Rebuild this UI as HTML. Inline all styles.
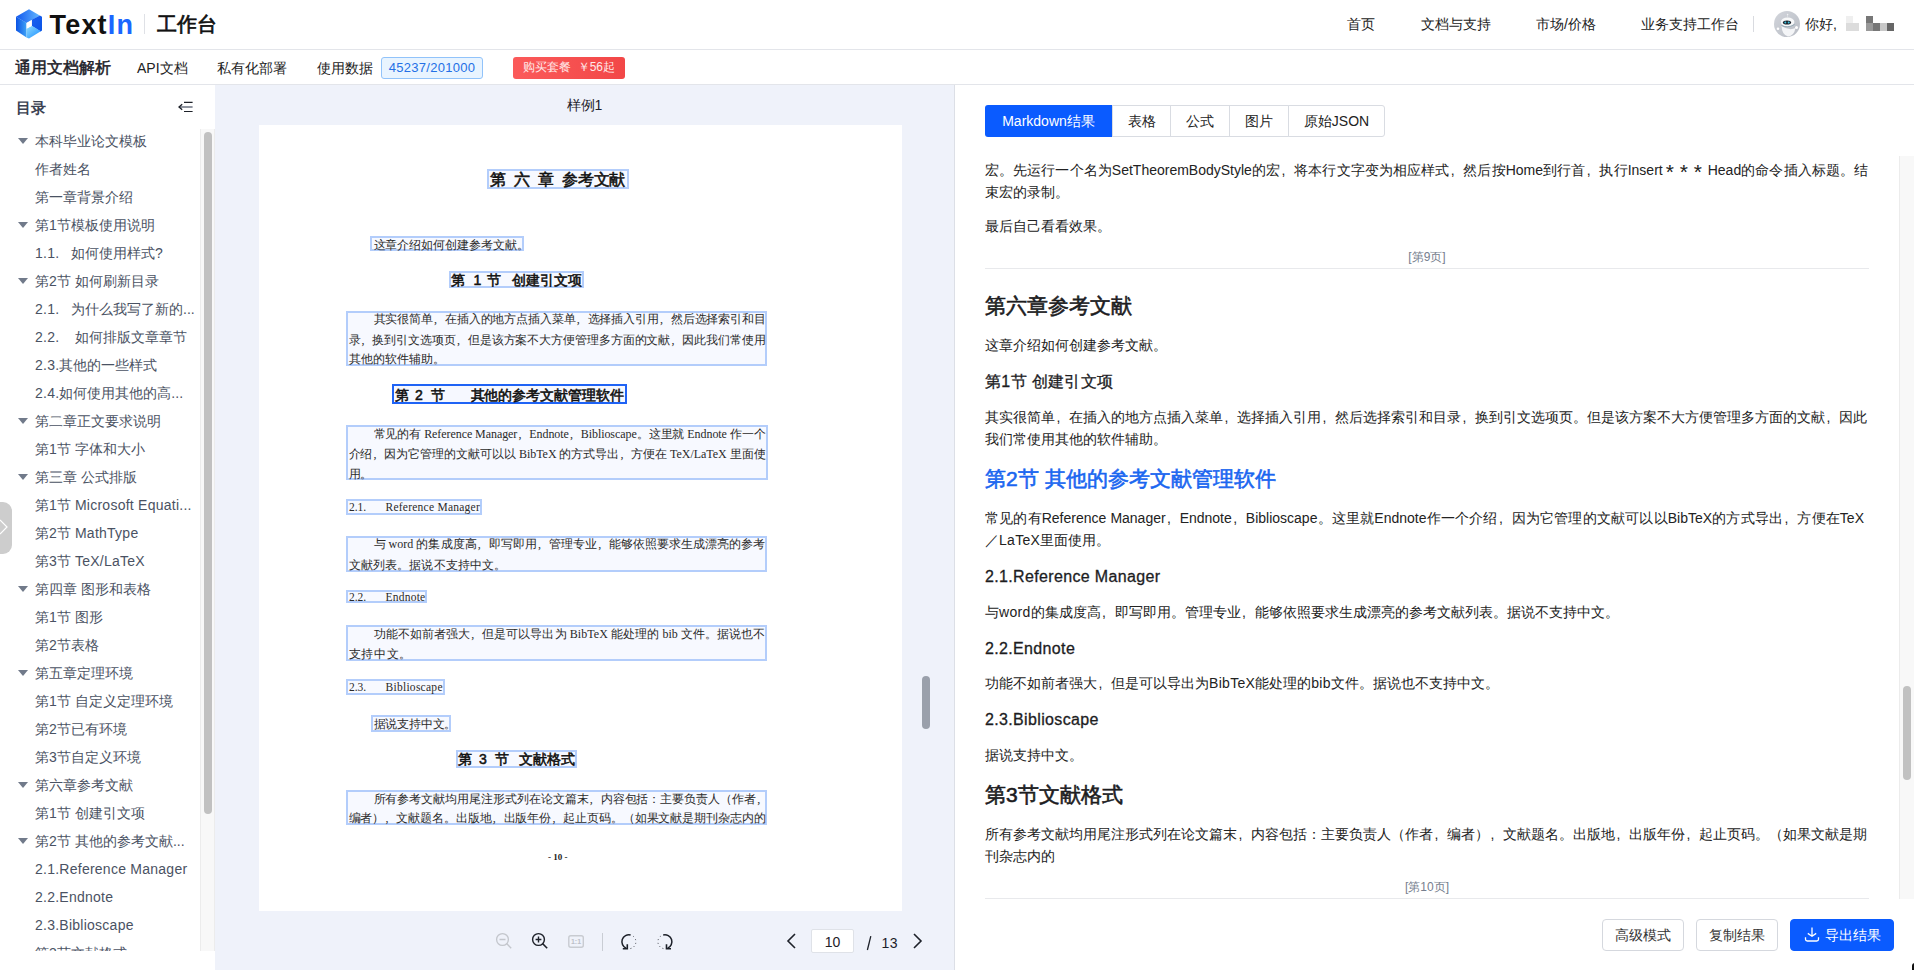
<!DOCTYPE html>
<html><head><meta charset="utf-8">
<style>
*{margin:0;padding:0;box-sizing:border-box}
html,body{width:1914px;height:970px;overflow:hidden;background:#fff;font-family:"Liberation Sans",sans-serif;color:#1d2129}
.a{position:absolute;white-space:nowrap}
#hdr{position:absolute;left:0;top:0;width:1914px;height:50px;border-bottom:1px solid #e3e5ea;background:#fff}
#nav{position:absolute;left:0;top:50px;width:1914px;height:35px;border-bottom:1px solid #e3e5ea;background:#fff}
#side{position:absolute;left:0;top:85px;width:215px;height:885px;background:#fff}
#pdf{position:absolute;left:215px;top:85px;width:739px;height:885px;background:#eff2fa}
#divv{position:absolute;left:954px;top:85px;width:1px;height:885px;background:#dcdfe6}
#right{position:absolute;left:955px;top:85px;width:959px;height:885px;background:#fff}
.toc{position:absolute;left:0;font-size:14px;line-height:20px;color:#4a5263;white-space:nowrap}
.tri{position:absolute;left:17.6px;width:0;height:0;border-left:5.2px solid transparent;border-right:5.2px solid transparent;border-top:6px solid #717a8a}
.md{position:absolute;left:30px;font-size:14px;line-height:22px;color:#222;white-space:nowrap}
.h1{position:absolute;left:30px;font-size:21px;line-height:28px;font-weight:normal;-webkit-text-stroke:0.6px currentColor;color:#1d1d1f;white-space:nowrap}
.h3{position:absolute;left:30px;font-size:16px;line-height:22px;font-weight:normal;-webkit-text-stroke:0.3px currentColor;letter-spacing:0.35px;color:#1d1d1f;white-space:nowrap}
.pg{position:absolute;left:30px;width:884px;text-align:center;font-size:12px;line-height:16px;color:#767e8e}
.cm{display:inline-block;width:1em;text-indent:0.1em;text-align:left}
.sts{display:inline-block;width:45px;padding-left:3px;white-space:nowrap}.st{display:inline-block;width:14px;text-align:center;font-size:21px;line-height:14px;position:relative;top:4px;letter-spacing:0}
.hr{position:absolute;left:30px;width:884px;height:1px;background:#e8e9ec}
.bx{position:absolute;border:2px solid #b3cdfb;background:#f7f9ff}
.pt{position:absolute;font-family:"Liberation Serif",serif;font-size:12.5px;line-height:20px;color:#2a2a2a;white-space:nowrap}
.ph{position:absolute;font-family:"Liberation Sans",sans-serif;font-weight:normal;-webkit-text-stroke:0.55px #111;color:#111;white-space:nowrap}
.btn{position:absolute;top:834px;height:32px;border:1px solid #d5d8de;border-radius:4px;background:#fff;font-size:14px;line-height:30px;text-align:center;color:#333}
</style></head><body>

<!-- HEADER -->
<div id="hdr">
  <svg class="a" style="left:14px;top:7px" width="32" height="34" viewBox="14 7 32 34">
    <defs>
      <linearGradient id="gt" x1="0" y1="0" x2="1" y2="0"><stop offset="0" stop-color="#1258ee"/><stop offset="1" stop-color="#62b6ff"/></linearGradient>
      <linearGradient id="gl" x1="0" y1="0" x2="1" y2="0"><stop offset="0" stop-color="#0b52e4"/><stop offset="1" stop-color="#3ea2f6"/></linearGradient>
      <linearGradient id="gr" x1="0" y1="0" x2="1" y2="1"><stop offset="0" stop-color="#1a5ff0"/><stop offset="1" stop-color="#0a54e6"/></linearGradient>
      <linearGradient id="gb" x1="0" y1="0" x2="1" y2="1"><stop offset="0" stop-color="#8fdcff"/><stop offset="1" stop-color="#1a8dff"/></linearGradient>
    </defs>
    <polygon points="16,16.8 29,9.2 39.8,15.5 31.8,20 26.5,23" fill="url(#gt)"/>
    <polygon points="16,16.8 26.5,22.8 26.5,37.6 16,30.6" fill="url(#gl)"/>
    <polygon points="31.8,19.8 39.8,15.4 42,16.8 42,30.6 40.6,31.4 31.8,26" fill="url(#gr)"/>
    <polygon points="26.5,28.6 31.8,25.8 40.8,31.2 29,38.6 26.5,37.4" fill="url(#gb)"/>
    <polygon points="26.6,22.9 31.7,19.9 31.7,25.9 26.6,28.7" fill="#fff"/>
  </svg>
  <div class="a" style="left:49.5px;top:7.5px;font-size:27px;line-height:34px;font-weight:bold;letter-spacing:1.2px;color:#111"><span>Text</span><span style="color:#1a66ff">In</span></div>
  <div class="a" style="left:144px;top:14px;width:1px;height:20px;background:#dfe1e6"></div>
  <div class="a" style="left:157px;top:10px;font-size:20px;line-height:28px;font-weight:normal;-webkit-text-stroke:0.7px #111;color:#111">工作台</div>

  <div class="a" style="left:1347px;top:14px;font-size:14px;line-height:20px;color:#222">首页</div>
  <div class="a" style="left:1421px;top:14px;font-size:14px;line-height:20px;color:#222">文档与支持</div>
  <div class="a" style="left:1536px;top:14px;font-size:14px;line-height:20px;color:#222">市场/价格</div>
  <div class="a" style="left:1641px;top:14px;font-size:14px;line-height:20px;color:#222">业务支持工作台</div>
  <div class="a" style="left:1753px;top:16px;width:1px;height:16px;background:#d9dbe0"></div>
  <svg class="a" style="left:1774px;top:11px" width="26" height="26" viewBox="0 0 26 26">
    <defs><linearGradient id="av" x1="0" y1="0" x2="1" y2="1"><stop offset="0" stop-color="#d2d5db"/><stop offset="1" stop-color="#b9bdc5"/></linearGradient></defs>
    <circle cx="13" cy="13" r="13" fill="url(#av)"/>
    <path d="M7.5 15 Q8 24 14 25.5 Q20 25 21.5 17 Q15 20 7.5 15 Z" fill="#f4f5f7"/>
    <ellipse cx="13.6" cy="11" rx="6.8" ry="4.6" fill="#f7f8f9"/>
    <path d="M7.5 14.5 Q13.5 17.5 20.5 13.5" fill="none" stroke="#6f8ea0" stroke-width="0.6"/>
    <ellipse cx="13" cy="11.5" rx="4.1" ry="2.1" fill="#1c232c"/>
    <circle cx="11.3" cy="11.5" r="1" fill="#3fc0dc"/><circle cx="14.7" cy="11.5" r="1" fill="#3fc0dc"/>
    <circle cx="4" cy="17.8" r="1.3" fill="#fff"/><circle cx="22.5" cy="16.5" r="1.5" fill="#fff"/>
    <path d="M13.6 6.4 V4.3" stroke="#e9ebee" stroke-width="0.6"/><circle cx="13.6" cy="3.6" r="0.8" fill="#eef0f2"/>
  </svg>
  <div class="a" style="left:1805px;top:14px;font-size:14px;line-height:20px;color:#222">你好,</div>
  <div class="a" style="left:1846px;top:23px;width:13px;height:8px;background:#dcdcdc"></div>
  <div class="a" style="left:1846px;top:16px;width:7px;height:7px;background:#efefef"></div>
  <div class="a" style="left:1866px;top:16px;width:7px;height:7px;background:#777"></div>
  <div class="a" style="left:1866px;top:23px;width:7px;height:8px;background:#999"></div>
  <div class="a" style="left:1873px;top:23px;width:7px;height:8px;background:#777"></div>
  <div class="a" style="left:1880px;top:23px;width:7px;height:8px;background:#c8c8c8"></div>
  <div class="a" style="left:1887px;top:23px;width:7px;height:8px;background:#666"></div>
</div>

<!-- NAV -->
<div id="nav">
  <div class="a" style="left:15px;top:7px;font-size:16px;line-height:22px;font-weight:normal;-webkit-text-stroke:0.5px #1d2129;color:#1d2129">通用文档解析</div>
  <div class="a" style="left:137px;top:8px;font-size:14px;line-height:20px;color:#222">API文档</div>
  <div class="a" style="left:217px;top:8px;font-size:14px;line-height:20px;color:#222">私有化部署</div>
  <div class="a" style="left:317px;top:8px;font-size:14px;line-height:20px;color:#222">使用数据</div>
  <div class="a" style="left:381px;top:7px;width:102px;height:22px;border:1px solid #91c3fa;border-radius:3px;background:#e8f4ff;color:#2470e6;font-size:13px;line-height:20px;letter-spacing:0.3px;text-align:center">45237/201000</div>
  <div class="a" style="left:513px;top:7px;width:112px;height:22px;border-radius:3px;background:linear-gradient(90deg,#fb5a5a,#f24747);color:#ffe9e9;font-size:12px;line-height:21px;text-align:center">购买套餐&nbsp;&nbsp;￥56起</div>
</div>

<!-- SIDEBAR -->
<div id="side">
  <div class="a" style="left:16px;top:12px;font-size:15px;line-height:22px;font-weight:bold;color:#3b4252">目录</div>
  <svg class="a" style="left:177px;top:16px" width="17" height="12" viewBox="0 0 17 12">
    <path d="M7 1.4 H15.6 M7 10.5 H15.6" stroke="#1d2129" stroke-width="1.2"/>
    <path d="M2.5 6 H15.6" stroke="#6b7280" stroke-width="1.5"/>
    <path d="M5.2 3.2 L2 6 L5.2 8.8" fill="none" stroke="#1d2129" stroke-width="1.3"/>
  </svg>
  <div id="toclist" style="position:absolute;left:0;top:44px;width:200px;height:822px;overflow:hidden"><div class="tri" style="top:9px"></div>
<div class="toc" style="left:35px;top:2px">本科毕业论文模板</div>
<div class="toc" style="left:35px;top:30px">作者姓名</div>
<div class="toc" style="left:35px;top:58px">第一章背景介绍</div>
<div class="tri" style="top:93px"></div>
<div class="toc" style="left:35px;top:86px">第<span style="letter-spacing:0.25px">1</span>节模板使用说明</div>
<div class="toc" style="left:35px;top:114px"><span style="letter-spacing:0.25px">1.1.</span>&nbsp;&nbsp;&nbsp;如何使用样式?</div>
<div class="tri" style="top:149px"></div>
<div class="toc" style="left:35px;top:142px">第<span style="letter-spacing:0.25px">2</span>节 如何刷新目录</div>
<div class="toc" style="left:35px;top:170px"><span style="letter-spacing:0.25px">2.1.</span>&nbsp;&nbsp;&nbsp;为什么我写了新的...</div>
<div class="toc" style="left:35px;top:198px"><span style="letter-spacing:0.25px">2.2.</span>&nbsp;&nbsp;&nbsp;&nbsp;如何排版文章章节</div>
<div class="toc" style="left:35px;top:226px"><span style="letter-spacing:0.25px">2.3.</span>其他的一些样式</div>
<div class="toc" style="left:35px;top:254px"><span style="letter-spacing:0.25px">2.4.</span>如何使用其他的高...</div>
<div class="tri" style="top:289px"></div>
<div class="toc" style="left:35px;top:282px">第二章正文要求说明</div>
<div class="toc" style="left:35px;top:310px">第<span style="letter-spacing:0.25px">1</span>节 字体和大小</div>
<div class="tri" style="top:345px"></div>
<div class="toc" style="left:35px;top:338px">第三章 公式排版</div>
<div class="toc" style="left:35px;top:366px">第<span style="letter-spacing:0.25px">1</span>节 <span style="letter-spacing:0.25px">Microsoft Equati...</span></div>
<div class="toc" style="left:35px;top:394px">第<span style="letter-spacing:0.25px">2</span>节 <span style="letter-spacing:0.25px">MathType</span></div>
<div class="toc" style="left:35px;top:422px">第<span style="letter-spacing:0.25px">3</span>节 <span style="letter-spacing:0.25px">TeX/LaTeX</span></div>
<div class="tri" style="top:457px"></div>
<div class="toc" style="left:35px;top:450px">第四章 图形和表格</div>
<div class="toc" style="left:35px;top:478px">第<span style="letter-spacing:0.25px">1</span>节 图形</div>
<div class="toc" style="left:35px;top:506px">第<span style="letter-spacing:0.25px">2</span>节表格</div>
<div class="tri" style="top:541px"></div>
<div class="toc" style="left:35px;top:534px">第五章定理环境</div>
<div class="toc" style="left:35px;top:562px">第<span style="letter-spacing:0.25px">1</span>节 自定义定理环境</div>
<div class="toc" style="left:35px;top:590px">第<span style="letter-spacing:0.25px">2</span>节已有环境</div>
<div class="toc" style="left:35px;top:618px">第<span style="letter-spacing:0.25px">3</span>节自定义环境</div>
<div class="tri" style="top:653px"></div>
<div class="toc" style="left:35px;top:646px">第六章参考文献</div>
<div class="toc" style="left:35px;top:674px">第<span style="letter-spacing:0.25px">1</span>节 创建引文项</div>
<div class="tri" style="top:709px"></div>
<div class="toc" style="left:35px;top:702px">第<span style="letter-spacing:0.25px">2</span>节 其他的参考文献...</div>
<div class="toc" style="left:35px;top:730px"><span style="letter-spacing:0.25px">2.1.Reference Manager</span></div>
<div class="toc" style="left:35px;top:758px"><span style="letter-spacing:0.25px">2.2.Endnote</span></div>
<div class="toc" style="left:35px;top:786px"><span style="letter-spacing:0.25px">2.3.Biblioscape</span></div>
<div class="toc" style="left:35px;top:814px">第<span style="letter-spacing:0.25px">3</span>节文献格式</div></div>
  <div class="a" style="left:200px;top:44px;width:15px;height:822px;background:#f8f8f8;border-left:1px solid #ececec;border-right:1px solid #ececec"></div>
  <div class="a" style="left:204px;top:47px;width:8px;height:682px;border-radius:4px;background:#c1c1c1"></div>
  <div class="a" style="left:-10px;top:417px;width:22px;height:52px;border-radius:9px;background:#cdcdcd"></div>
  <svg class="a" style="left:0;top:433px" width="9" height="18" viewBox="0 0 9 18"><path d="M0 2 L7 9 L0 16" fill="none" stroke="#fff" stroke-width="1.2"/></svg>
</div>

<!-- PDF -->
<div id="pdf">
  <div class="a" style="left:0;top:10px;width:739px;text-align:center;font-size:14px;line-height:20px;color:#1d2129">样例1</div>
  <div class="a" style="left:44px;top:40px;width:643px;height:786px;background:#fff;overflow:hidden" id="page"><div class="bx" style="left:227.5px;top:43.599999999999994px;width:142.70000000000005px;height:20.900000000000006px"></div>
<div id="fit1" class="ph" style="left:231.0px;top:45.0px;font-size:16px;line-height:20px;letter-spacing:0.000px;"><span>第</span></div>
<div id="fit2" class="ph" style="left:255.29999999999995px;top:45.0px;font-size:16px;line-height:20px;letter-spacing:0.000px;"><span>六</span></div>
<div id="fit3" class="ph" style="left:278.79999999999995px;top:45.0px;font-size:16px;line-height:20px;letter-spacing:0.000px;"><span>章</span></div>
<div id="fit4" class="ph" style="left:303.1px;top:45.0px;font-size:16px;line-height:20px;letter-spacing:-0.200px;"><span>参考文献</span></div>
<div class="bx" style="left:110.80000000000001px;top:110.69999999999999px;width:154.40000000000003px;height:15.700000000000017px"></div>
<div id="fit5" class="pt" style="left:114.5px;top:110.0px;font-size:12px;line-height:20px;letter-spacing:-0.017px;"><span>这章介绍如何创建参考文献。</span></div>
<div class="bx" style="left:189.60000000000002px;top:145.5px;width:135.89999999999998px;height:17.69999999999999px"></div>
<div id="fit6" class="ph" style="left:192.10000000000002px;top:145.0px;font-size:14px;line-height:20px;letter-spacing:0.000px;"><span>第</span></div>
<div id="fit7" class="ph" style="left:214.5px;top:145.0px;font-size:14px;line-height:20px;letter-spacing:0.000px;"><span>1</span></div>
<div id="fit8" class="ph" style="left:227.8px;top:145.0px;font-size:14px;line-height:20px;letter-spacing:0.000px;"><span>节</span></div>
<div id="fit9" class="ph" style="left:252.89999999999998px;top:145.0px;font-size:14px;line-height:20px;letter-spacing:-0.050px;"><span>创建引文项</span></div>
<div class="bx" style="left:87.39999999999998px;top:185.8px;width:420.6px;height:55.19999999999999px"></div>
<div id="fit10" class="pt" style="left:114.5px;top:184.3px;font-size:12px;line-height:20px;letter-spacing:-0.125px;"><span>其实很简单<span class=cm>,</span>在插入的地方点插入菜单<span class=cm>,</span>选择插入引用<span class=cm>,</span>然后选择索引和目</span></div>
<div id="fit11" class="pt" style="left:89.5px;top:204.5px;font-size:12px;line-height:20px;letter-spacing:-0.088px;"><span>录<span class=cm>,</span>换到引文选项页<span class=cm>,</span>但是该方案不大方便管理多方面的文献<span class=cm>,</span>因此我们常使用</span></div>
<div id="fit12" class="pt" style="left:89.5px;top:224.3px;font-size:12px;line-height:20px;letter-spacing:0.114px;"><span>其他的软件辅助。</span></div>
<div class="bx" style="left:132.7px;top:259px;width:235.00000000000006px;height:20px;border:2px solid #1f63f5;background:#f6f8ff"></div>
<div id="fit13" class="ph" style="left:135.7px;top:260.0px;font-size:14px;line-height:20px;letter-spacing:0.000px;"><span>第</span></div>
<div id="fit14" class="ph" style="left:156.0px;top:260.0px;font-size:14px;line-height:20px;letter-spacing:0.000px;"><span>2</span></div>
<div id="fit15" class="ph" style="left:171.89999999999998px;top:260.0px;font-size:14px;line-height:20px;letter-spacing:0.000px;"><span>节</span></div>
<div id="fit16" class="ph" style="left:211.5px;top:260.0px;font-size:14px;line-height:20px;letter-spacing:-0.100px;"><span>其他的参考文献管理软件</span></div>
<div class="bx" style="left:87.39999999999998px;top:300.3px;width:421.20000000000005px;height:55.19999999999999px"></div>
<div id="fit17" class="pt" style="left:114.5px;top:298.6px;font-size:12px;line-height:20px;letter-spacing:-0.069px;"><span>常见的有 Reference Manager<span class=cm>,</span>Endnote<span class=cm>,</span>Biblioscape。这里就 Endnote 作一个</span></div>
<div id="fit18" class="pt" style="left:89.5px;top:318.6px;font-size:12px;line-height:20px;letter-spacing:-0.041px;"><span>介绍<span class=cm>,</span>因为它管理的文献可以以 BibTeX 的方式导出<span class=cm>,</span>方便在 TeX/LaTeX 里面使</span></div>
<div id="fit19" class="pt" style="left:89.5px;top:339.0px;font-size:12px;line-height:20px;letter-spacing:-0.200px;"><span>用。</span></div>
<div class="bx" style="left:87.39999999999998px;top:373.9px;width:135.40000000000003px;height:16.100000000000023px"></div>
<div id="fit20" class="pt" style="left:90.0px;top:372.0px;font-size:11.5px;line-height:20px;letter-spacing:-0.083px;"><span>2.1.</span></div>
<div id="fit21" class="pt" style="left:126.5px;top:372.0px;font-size:11.5px;line-height:20px;letter-spacing:0.247px;"><span>Reference Manager</span></div>
<div class="bx" style="left:87.39999999999998px;top:410.6px;width:420.6px;height:36.10000000000002px"></div>
<div id="fit22" class="pt" style="left:114.5px;top:409.0px;font-size:12px;line-height:20px;letter-spacing:0.038px;"><span>与 word 的集成度高<span class=cm>,</span>即写即用<span class=cm>,</span>管理专业<span class=cm>,</span>能够依照要求生成漂亮的参考</span></div>
<div id="fit23" class="pt" style="left:89.5px;top:429.79999999999995px;font-size:12px;line-height:20px;letter-spacing:0.150px;"><span>文献列表。据说不支持中文。</span></div>
<div class="bx" style="left:87.39999999999998px;top:465px;width:81.0px;height:13.200000000000045px"></div>
<div id="fit24" class="pt" style="left:90.0px;top:462.0px;font-size:11.5px;line-height:20px;letter-spacing:-0.083px;"><span>2.2.</span></div>
<div id="fit25" class="pt" style="left:126.5px;top:462.0px;font-size:11.5px;line-height:20px;letter-spacing:0.229px;"><span>Endnote</span></div>
<div class="bx" style="left:87.39999999999998px;top:500px;width:420.6px;height:35.700000000000045px"></div>
<div id="fit26" class="pt" style="left:114.5px;top:499.0px;font-size:12px;line-height:20px;letter-spacing:0.073px;"><span>功能不如前者强大<span class=cm>,</span>但是可以导出为 BibTeX 能处理的 bib 文件。据说也不</span></div>
<div id="fit27" class="pt" style="left:89.5px;top:519.0px;font-size:12px;line-height:20px;letter-spacing:0.700px;"><span>支持中文。</span></div>
<div class="bx" style="left:87.39999999999998px;top:554px;width:98.20000000000005px;height:16.200000000000045px"></div>
<div id="fit28" class="pt" style="left:90.0px;top:552.0px;font-size:11.5px;line-height:20px;letter-spacing:-0.083px;"><span>2.3.</span></div>
<div id="fit29" class="pt" style="left:126.5px;top:552.0px;font-size:11.5px;line-height:20px;letter-spacing:0.270px;"><span>Biblioscape</span></div>
<div class="bx" style="left:112px;top:590.4px;width:79.80000000000001px;height:16.600000000000023px"></div>
<div id="fit30" class="pt" style="left:114.5px;top:588.5px;font-size:12px;line-height:20px;letter-spacing:-0.200px;"><span>据说支持中文。</span></div>
<div class="bx" style="left:197px;top:625px;width:121px;height:17.600000000000023px"></div>
<div id="fit31" class="ph" style="left:199.3px;top:624.0px;font-size:14px;line-height:20px;letter-spacing:0.000px;"><span>第</span></div>
<div id="fit32" class="ph" style="left:220.0px;top:624.0px;font-size:14px;line-height:20px;letter-spacing:0.000px;"><span>3</span></div>
<div id="fit33" class="ph" style="left:236.0px;top:624.0px;font-size:14px;line-height:20px;letter-spacing:0.000px;"><span>节</span></div>
<div id="fit34" class="ph" style="left:260.29999999999995px;top:624.0px;font-size:14px;line-height:20px;letter-spacing:-0.200px;"><span>文献格式</span></div>
<div class="bx" style="left:87.39999999999998px;top:665px;width:420.6px;height:35px"></div>
<div id="fit35" class="pt" style="left:114.5px;top:663.5px;font-size:12px;line-height:20px;letter-spacing:-0.050px;"><span>所有参考文献均用尾注形式列在论文篇末<span class=cm>,</span>内容包括：主要负责人（作者<span class=cm>,</span></span></div>
<div id="fit36" class="pt" style="left:89.5px;top:683.0px;font-size:12px;line-height:20px;letter-spacing:-0.088px;"><span>编者）<span class=cm>,</span>文献题名。出版地<span class=cm>,</span>出版年份<span class=cm>,</span>起止页码。（如果文献是期刊杂志内的</span></div>
<div class="a" style="left:289px;top:726px;font-size:9px;line-height:12px;color:#222;font-weight:bold;font-family:'Liberation Serif',serif">- 10 -</div></div><svg class="a" style="left:279px;top:846px" width="20" height="20" viewBox="0 0 20 20"><circle cx="8.5" cy="8.5" r="5.9" fill="none" stroke="#c3c6cc" stroke-width="1.3"/><path d="M12.6 12.6 L17.2 17.2" stroke="#c3c6cc" stroke-width="1.4"/><path d="M5.5 8.5 H11.5" stroke="#c3c6cc" stroke-width="1.5"/></svg>
<svg class="a" style="left:315px;top:846px" width="20" height="20" viewBox="0 0 20 20"><circle cx="8.5" cy="8.5" r="5.9" fill="none" stroke="#1d2129" stroke-width="1.4"/><path d="M12.6 12.6 L17.2 17.2" stroke="#1d2129" stroke-width="1.5"/><path d="M5.6 8.5 H11.4 M8.5 5.6 V11.4" stroke="#1d2129" stroke-width="1.4"/></svg>
<svg class="a" style="left:351px;top:848px" width="20" height="16" viewBox="0 0 20 16"><rect x="2.8" y="2.8" width="14.5" height="11.5" rx="2" fill="none" stroke="#c8cbd1" stroke-width="1.4"/><text x="10" y="11.4" font-size="7" font-weight="bold" text-anchor="middle" fill="#bcc0c8" font-family="Liberation Sans">1:1</text></svg>
<div class="a" style="left:387px;top:848px;width:1px;height:18px;background:#c9cdd4"></div>
<svg class="a" style="left:404px;top:846.5px" width="20" height="20" viewBox="0 0 20 20"><path d="M11.6 2.95 A7 7 0 0 0 7.2 16.2" fill="none" stroke="#1d2129" stroke-width="1.5"/><path d="M14.3 4.3 A7 7 0 0 1 9.2 16.7" fill="none" stroke="#1d2129" stroke-width="0.9" stroke-dasharray="0.9 2.7"/><path d="M8.3 12.2 V16.7 H3.8" fill="none" stroke="#1d2129" stroke-width="1.6"/></svg>
<svg class="a" style="left:440px;top:846.5px" width="20" height="20" viewBox="0 0 20 20"><g transform="translate(19.8,0) scale(-1,1)"><path d="M11.6 2.95 A7 7 0 0 0 7.2 16.2" fill="none" stroke="#1d2129" stroke-width="1.5"/><path d="M14.3 4.3 A7 7 0 0 1 9.2 16.7" fill="none" stroke="#1d2129" stroke-width="0.9" stroke-dasharray="0.9 2.7"/><path d="M8.3 12.2 V16.7 H3.8" fill="none" stroke="#1d2129" stroke-width="1.6"/></g></svg>
<svg class="a" style="left:569px;top:847px" width="14" height="18" viewBox="0 0 14 18"><path d="M11 2 L4 9 L11 16" fill="none" stroke="#1d2129" stroke-width="1.6"/></svg>
<div class="a" style="left:596px;top:844px;width:43px;height:24px;background:#fff;border:1px solid #dfe2e8;border-radius:2px;font-size:14px;line-height:24px;text-align:center;color:#1d2129">10</div>
<svg class="a" style="left:650px;top:850px" width="8" height="16" viewBox="0 0 8 16"><path d="M5.8 1.2 L2.4 15" stroke="#1d2129" stroke-width="1.3"/></svg>
<div class="a" style="left:666.5px;top:847.5px;font-size:14px;line-height:20px;letter-spacing:0.4px;color:#1d2129">13</div>
<svg class="a" style="left:696px;top:847px" width="14" height="18" viewBox="0 0 14 18"><path d="M3 2 L10 9 L3 16" fill="none" stroke="#1d2129" stroke-width="1.6"/></svg>
  <div class="a" style="left:707px;top:591px;width:8px;height:53px;border-radius:4px;background:#9aa0ab"></div>
</div>
<div id="divv"></div>

<!-- RIGHT -->
<div id="right"><div class="a" style="left:30px;top:20px;width:127px;height:32px;background:#0a5bff;border-radius:3px 0 0 3px;color:#fff;font-size:14px;line-height:32px;text-align:center">Markdown结果</div>
<div class="a" style="left:157px;top:20px;width:59px;height:32px;border:1px solid #d9dce2;background:#fff;color:#222;font-size:14px;line-height:30px;text-align:center">表格</div>
<div class="a" style="left:215px;top:20px;width:60px;height:32px;border:1px solid #d9dce2;background:#fff;color:#222;font-size:14px;line-height:30px;text-align:center">公式</div>
<div class="a" style="left:274px;top:20px;width:60px;height:32px;border:1px solid #d9dce2;background:#fff;color:#222;font-size:14px;line-height:30px;text-align:center">图片</div>
<div class="a" style="left:333px;top:20px;width:97px;height:32px;border:1px solid #d9dce2;border-radius:0 3px 3px 0;background:#fff;color:#222;font-size:14px;line-height:30px;text-align:center">原始JSON</div>
<div class="a" style="left:0;top:71px;width:944px;height:743px;overflow:hidden"><div class="md" style="left:30px;top:3px;width:883px;text-align:justify;text-align-last:justify;">宏。先运行一个名为SetTheoremBodyStyle的宏<span class=cm>,</span>将本行文字变为相应样式<span class=cm>,</span>然后按Home到行首<span class=cm>,</span>执行Insert<span class=sts><span class=st>*</span><span class=st>*</span><span class=st>*</span></span>Head的命令插入标题。结</div>
<div class="md" style="left:30px;top:25px;">束宏的录制。</div>
<div class="md" style="left:30px;top:59px;">最后自己看看效果。</div>
<div class="pg" style="left:30px;top:93px">[第9页]</div>
<div class="hr" style="left:30px;top:112px"></div>
<div class="h1" style="left:30px;top:135.5px;">第六章参考文献</div>
<div class="md" style="left:30px;top:178px;">这章介绍如何创建参考文献。</div>
<div class="h3" style="left:30px;top:214.5px">第1节 创建引文项</div>
<div class="md" style="left:30px;top:250px;width:882px;text-align:justify;text-align-last:justify;">其实很简单<span class=cm>,</span>在插入的地方点插入菜单<span class=cm>,</span>选择插入引用<span class=cm>,</span>然后选择索引和目录<span class=cm>,</span>换到引文选项页。但是该方案不大方便管理多方面的文献<span class=cm>,</span>因此</div>
<div class="md" style="left:30px;top:272px;">我们常使用其他的软件辅助。</div>
<div class="h1" style="left:30px;top:308.5px;color:#1a66f0;">第2节 其他的参考文献管理软件</div>
<div class="md" style="left:30px;top:351px;width:879px;text-align:justify;text-align-last:justify;">常见的有Reference Manager<span class=cm>,</span>Endnote<span class=cm>,</span>Biblioscape。这里就Endnote作一个介绍<span class=cm>,</span>因为它管理的文献可以以BibTeX的方式导出<span class=cm>,</span>方便在TeX</div>
<div class="md" style="left:30px;top:373px;">／<span style="letter-spacing:0.3px">LaTeX</span>里面使用。</div>
<div class="h3" style="left:30px;top:409.5px">2.1.Reference Manager</div>
<div class="md" style="left:30px;top:445px;">与<span style="letter-spacing:0.3px">word</span>的集成度高<span class=cm>,</span>即写即用。管理专业<span class=cm>,</span>能够依照要求生成漂亮的参考文献列表。据说不支持中文。</div>
<div class="h3" style="left:30px;top:481.5px">2.2.Endnote</div>
<div class="md" style="left:30px;top:516px;">功能不如前者强大<span class=cm>,</span>但是可以导出为<span style="letter-spacing:0.3px">BibTeX</span>能处理的<span style="letter-spacing:0.3px">bib</span>文件。据说也不支持中文。</div>
<div class="h3" style="left:30px;top:552.5px">2.3.Biblioscape</div>
<div class="md" style="left:30px;top:588px;">据说支持中文。</div>
<div class="h1" style="left:30px;top:625px;">第3节文献格式</div>
<div class="md" style="left:30px;top:667px;width:882px;text-align:justify;text-align-last:justify;">所有参考文献均用尾注形式列在论文篇末<span class=cm>,</span>内容包括：主要负责人（作者<span class=cm>,</span>编者）<span class=cm>,</span>文献题名。出版地<span class=cm>,</span>出版年份<span class=cm>,</span>起止页码。（如果文献是期</div>
<div class="md" style="left:30px;top:689px;">刊杂志内的</div>
<div class="pg" style="left:30px;top:723px">[第10页]</div>
<div class="hr" style="left:30px;top:742px"></div></div>
<div class="a" style="left:944px;top:71px;width:15px;height:743px;background:#f8f8f8;border-left:1px solid #ececec"></div>
<div class="a" style="left:948px;top:601px;width:8px;height:94px;border-radius:4px;background:#c1c1c1"></div>
<div class="btn" style="left:647px;top:834px;width:82px">高级模式</div>
<div class="btn" style="left:741px;top:834px;width:82px">复制结果</div>
<div class="btn" style="left:835px;top:834px;width:104px;background:#0a5bff;border-color:#0a5bff;color:#fff;padding-left:21px">导出结果</div>
<svg class="a" style="left:848px;top:842px" width="18" height="16" viewBox="0 0 18 16"><path d="M9 0.4 V9 M4.8 6.4 L9 9.2 L13.2 6.4" fill="none" stroke="#fff" stroke-width="1.3"/><path d="M2.5 10.2 V12.3 Q2.5 14 4.3 14 H13.7 Q15.5 14 15.5 12.3 V10.2" fill="none" stroke="#fff" stroke-width="1.3"/></svg></div>

<div class="a" style="left:1912px;top:963px;width:3px;height:8px;background:#111;border-radius:3px 0 0 0"></div>
</body></html>
